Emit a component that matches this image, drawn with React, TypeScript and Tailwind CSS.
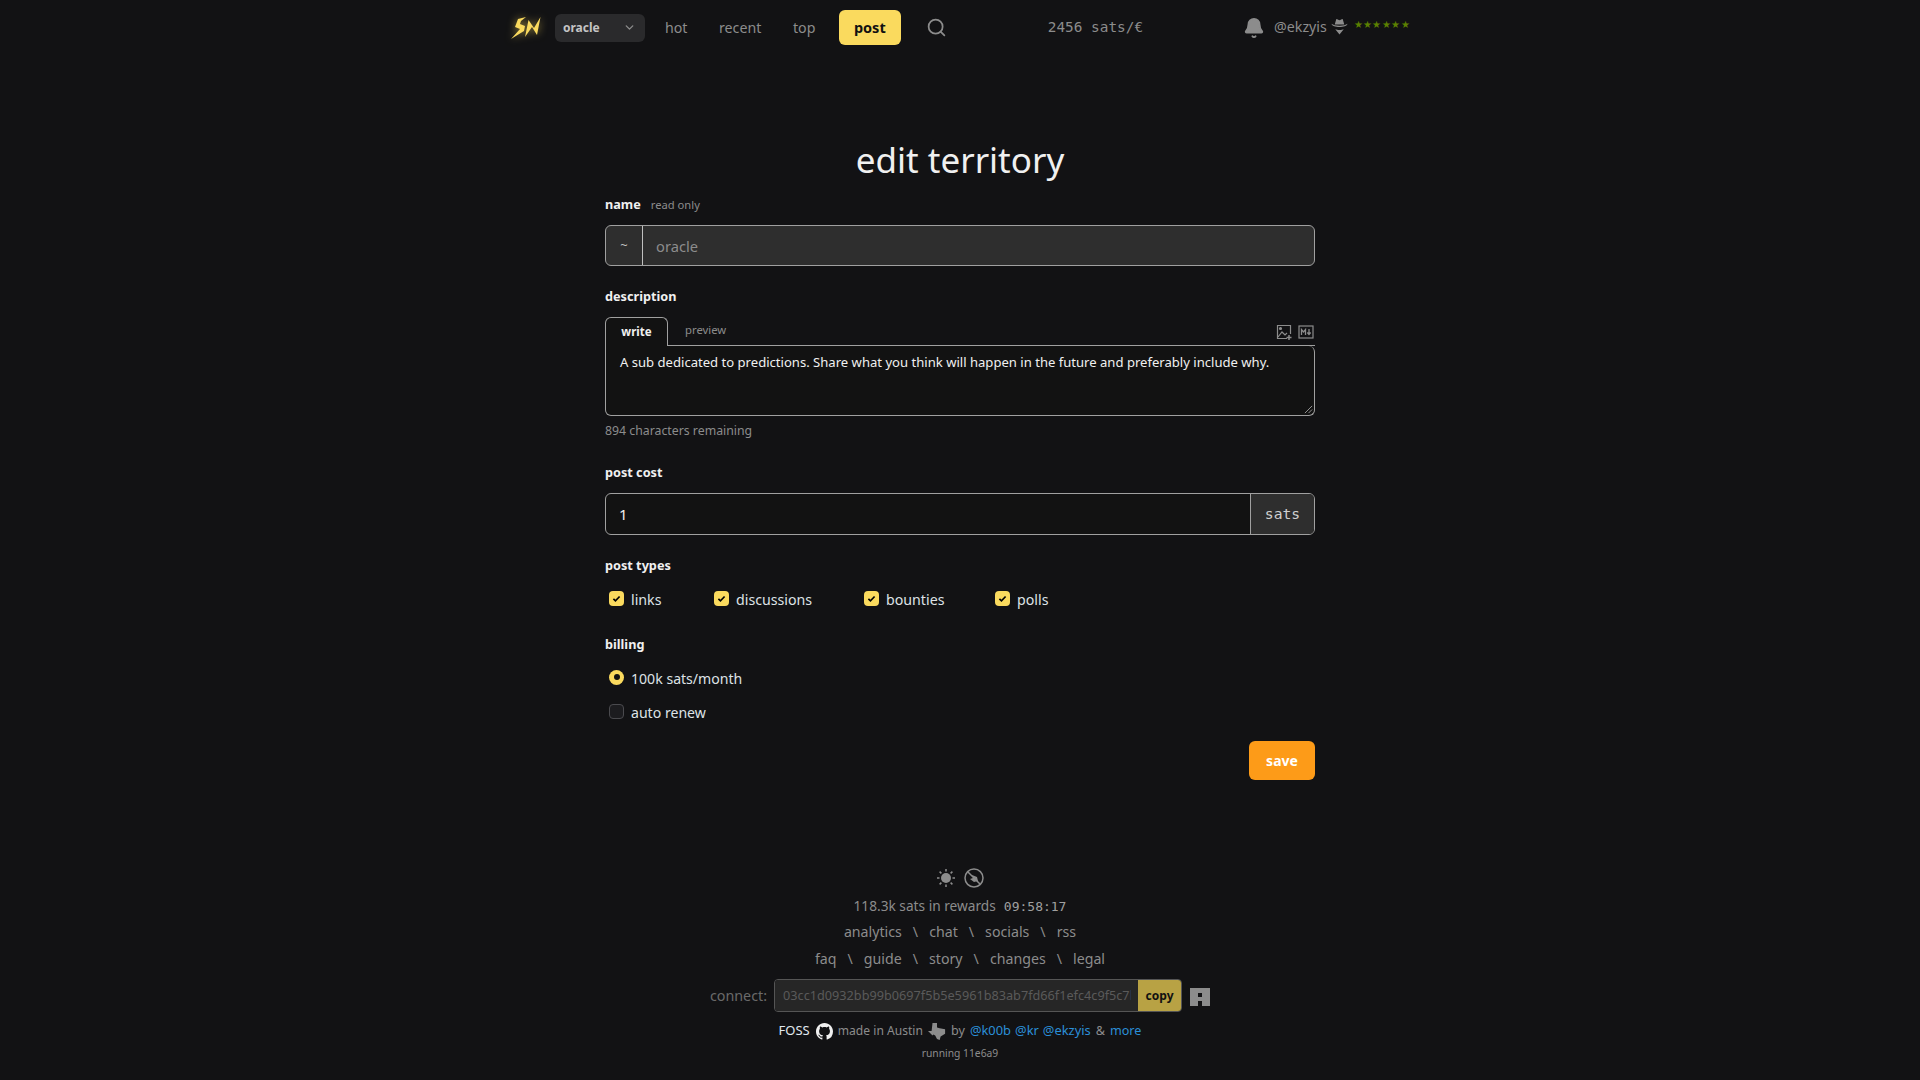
import React from "react";
import { ChevronDown, Search, Bell } from "lucide-react";

const font = "[font-family:'Noto_Sans',sans-serif]";
const mono = "font-['DejaVu_Sans_Mono',monospace]";

function Check({ label, w }: { label: string; w: string }) {
  return (
    <div className={`flex items-center ${w}`}>
      <span className="ml-[4px] mt-[-2px] flex h-[15px] w-[15px] items-center justify-center rounded-[4px] bg-[#fada5e]">
        <svg viewBox="0 0 16 16" className="h-[11px] w-[11px]"><path d="M3.5 8.5l3 3 6-6.500" fill="none" stroke="#000" strokeWidth="2.4" /></svg>
      </span>
      <span className="ml-[7px] mt-[1px] text-[14.2px] text-[#dee2e6]">{label}</span>
    </div>
  );
}

function Sep() {
  return <span className="text-[#8c8c8c]">\</span>;
}

export default function App() {
  return (
    <div className={`${font} flex min-h-[1080px] flex-col items-center bg-[#121214] text-[#f0f0f0]`}>
      <nav className="flex h-[55px] w-[900px] shrink-0 items-center whitespace-nowrap text-[#8c8c8c]">
        <svg viewBox="0 0 32 24" className="mr-[13px] h-[24px] w-[32px] shrink-0 drop-shadow-[0_0_4px_rgba(250,218,94,0.6)]">
          <path d="M16 1 L8 3 L5 11 L10 13 L1 23 L14 15 L15 10 L10 8 L11 5 Z" fill="#fada5e" />
          <path d="M15 21 L18.500 4 L24 12 L30.500 1 L27 19 L22 11 Z" fill="#fada5e" />
        </svg>
        <div className="flex h-[28px] w-[90px] shrink-0 items-center justify-between rounded-[6px] bg-[#2a2a2c] pl-[8px] pr-[9px] text-[12px] font-bold text-[#c4c4c4]">
          <span className="mt-[1px]">oracle</span> <ChevronDown size={13} strokeWidth={2.5} className="text-[#8c8c8c]" />
        </div>
        <span className="ml-[20px] w-[22px] text-[14.2px]">hot</span>
        <span className="ml-[32px] w-[41px] text-[14.2px]">recent</span>
        <span className="ml-[33px] w-[23px] text-[14.2px]">top</span>
        <span className="ml-[23px] flex h-[35px] w-[62px] shrink-0 items-center justify-center rounded-[6px] bg-[#fada5e] text-[14.5px] font-bold text-[#111]">post</span>
        <Search size={21} className="ml-[25px] shrink-0 text-[#8c8c8c]" />
        <span className={`ml-[101px] mt-[1px] w-[96px] ${mono} text-[14.4px]`}>2456 sats/€</span>
        <Bell size={22} fill="#8c8c8c" className="ml-[100px] shrink-0 text-[#8c8c8c]" />
        <span className="ml-[9px] mt-[-1px] w-[54px] text-[14.2px]">@ekzyis</span>
        <svg viewBox="0 0 16 16" className="ml-[3px] mt-[-3px] h-[17px] w-[17px] shrink-0" fill="#8c8c8c">
          <path d="M5 1C6 1 7 2 8 2C9 2 10 1 11 1L12.500 6H3.500Z" />
          <path d="M.5 5.500C3 8 13 8 15.500 5.500C15 9.500 1 9.500 .5 5.500Z" />
          <path d="M4 10.500C6 11.500 10 11.500 12 10.500L8 15.500Z" />
        </svg>
        <span className="ml-[6px] mt-[-4px] text-[9.5px] tracking-[0.4px] text-[#5c8001]">★★★★★★</span>
      </nav>

      <main className="flex w-[710px] flex-col">
        <h1 className="mb-[9px] mt-[78px] text-center text-[35px] font-normal leading-[53px] text-[#f0f0f0]">edit territory</h1>

        <div className="flex h-[20px] items-center gap-[10px] text-[12.7px] font-bold text-[#f0f0f0]">
          name <span className="text-[11.2px] font-normal text-[#8c8c8c]">read only</span>
        </div>
        <div className="mt-[10px] flex h-[41px] overflow-hidden rounded-[6px] border border-[#a0a0a0] bg-[#2e2e2e] text-[#8c8c8c]">
          <span className="flex w-[37px] items-center justify-center border-r border-[#c0c0c0] text-[13px] text-[#c4c4c4]">~</span>
          <span className="flex items-center pl-[13px] pt-[1px] text-[14.7px]">oracle</span>
        </div>

        <div className="mt-[20px] h-[20px] text-[12.7px] font-bold leading-[20px]">description</div>
        <div className="relative mt-[11px] flex h-[29px]">
          <span className="z-10 flex h-[29px] w-[63px] items-center justify-center rounded-t-[6px] border border-b-0 border-[#a0a0a0] bg-[#121212] text-[11.5px] font-bold">write</span>
          <span className="ml-[17px] mt-[5px] text-[11.3px] text-[#8c8c8c]">preview</span>
          <div className="ml-auto mt-[7px] flex gap-[6px] pr-[1px]">
            <svg viewBox="0 0 16 16" className="h-[16px] w-[16px]" fill="none" stroke="#8c8c8c" strokeWidth="1.2">
              <path d="M11 14.500H1.500v-13h13V10" />
              <path d="M2 13l4-5 3 3 2-2" />
              <circle cx="4.5" cy="4.5" r="1" fill="#8c8c8c" />
              <path d="M13 11v5M10.500 13.500h5" strokeWidth="1.5" />
            </svg>
            <svg viewBox="0 0 16 16" className="h-[16px] w-[16px]" fill="none" stroke="#8c8c8c" strokeWidth="1.2">
              <rect x="1" y="2" width="14" height="12" />
              <path d="M3.500 11V5.500l2 2.500 2-2.500V11M11 5v5M9.300 8.500l1.700 2 1.700-2" strokeWidth="1.3" />
            </svg>
          </div>
          <span className="absolute bottom-0 left-[63px] right-0 h-px bg-[#a0a0a0]" />
        </div>
        <div className="relative h-[70px] rounded-b-[6px] rounded-tr-[6px] border border-t-0 border-[#a0a0a0] bg-[#121212] px-[14px] pt-[6px] text-[13.08px] leading-[20px] text-[#f0f0f0]">
          A sub dedicated to predictions. Share what you think will happen in the future and preferably include why.
          <svg viewBox="0 0 10 10" className="absolute bottom-[1px] right-[1px] h-[9px] w-[9px]" stroke="#a0a0a0" strokeWidth="1"><path d="M1 9l8-8M5 9l4-4" /></svg>
        </div>
        <div className="mt-[5px] h-[20px] text-[12.3px] leading-[20px] text-[#8c8c8c]">894 characters remaining</div>

        <div className="mt-[21px] h-[20px] text-[12.7px] font-bold leading-[20px]">post cost</div>
        <div className="mt-[11px] flex h-[42px] overflow-hidden rounded-[6px] border border-[#a0a0a0] bg-[#121212]">
          <span className="flex flex-1 items-center pl-[13px] text-[15px] text-[#f0f0f0]">1</span>
          <span className={`flex w-[64px] items-center justify-center border-l border-[#a0a0a0] bg-[#2e2e2e] pt-[1px] ${mono} text-[14.7px] text-[#d0d0d0]`}>sats</span>
        </div>

        <div className="mt-[20px] h-[20px] text-[12.7px] font-bold leading-[20px]">post types</div>
        <div className="mt-[14px] flex h-[20px]">
          <Check label="links" w="w-[105px]" />
          <Check label="discussions" w="w-[150px]" />
          <Check label="bounties" w="w-[131px]" />
          <Check label="polls" w="w-[100px]" />
        </div>

        <div className="mt-[25px] h-[20px] text-[12.7px] font-bold leading-[20px]">billing</div>
        <div className="mt-[14px] flex h-[20px] items-center">
          <span className="ml-[4px] mt-[-2px] flex h-[15px] w-[15px] items-center justify-center rounded-full bg-[#fada5e]"><span className="h-[6px] w-[6px] rounded-full bg-[#111]" /></span>
          <span className="ml-[7px] mt-[1px] text-[14.1px] text-[#dee2e6]">100k sats/month</span>
        </div>
        <div className="mt-[14px] flex h-[20px] items-center">
          <span className="ml-[4px] mt-[-2px] h-[15px] w-[15px] rounded-[4px] border border-[#4a4a4e] bg-[#1c1c1f]" />
          <span className="ml-[7px] mt-[1px] text-[14.1px] text-[#dee2e6]">auto renew</span>
        </div>
        <div className="mt-[19px] flex justify-end">
          <span className="flex h-[39px] w-[66px] items-center justify-center rounded-[6px] bg-[#fd9b18] text-[14px] font-bold text-white">save</span>
        </div>
      </main>

      <footer className="mt-[86px] flex flex-col items-center text-[14px] text-[#8c8c8c]">
        <div className="flex h-[24px] items-center gap-[8px]">
          <svg viewBox="0 0 20 20" className="h-[20px] w-[20px]" fill="#8c8c8c">
            <circle cx="10" cy="10" r="5" />
            <path d="M10 1v2.500M10 16.500V19M1 10h2.500M16.500 10H19M3.600 3.600l1.800 1.800M14.600 14.600l1.800 1.800M3.600 16.400l1.800-1.800M14.600 5.400l1.800-1.800" stroke="#8c8c8c" strokeWidth="1.500" />
          </svg>
          <svg viewBox="0 0 20 20" className="h-[20px] w-[20px]" fill="none" stroke="#8c8c8c" strokeWidth="1.500">
            <circle cx="10" cy="10" r="9" />
            <path d="M4 4l12 12" />
            <path d="M6 11l3-1-1-3 5 2 1 4-4 1z" fill="#8c8c8c" stroke="none" />
          </svg>
        </div>
        <div className="mt-[6px] flex h-[21px] items-center gap-[8px] text-[13.7px]">
          118.3k sats in rewards <span className={`${mono} text-[13px] text-[#a0a0a0]`}>09:58:17</span>
        </div>
        <div className="mt-[4px] flex h-[21px] items-center gap-[11px] text-[14.200px]">
          <span>analytics</span><Sep /><span>chat</span><Sep /><span>socials</span><Sep /><span>rss</span>
        </div>
        <div className="mt-[6px] flex h-[21px] items-center gap-[11px] text-[14.200px]">
          <span>faq</span><Sep /><span>guide</span><Sep /><span>story</span><Sep /><span>changes</span><Sep /><span>legal</span>
        </div>
        <div className="mt-[10px] flex h-[33px] items-center">
          <span className="mr-[7px] text-[14.300px] text-[#6a6a6a]">connect:</span>
          <div className="flex h-[33px] w-[408px] overflow-hidden rounded-[4px] border border-[#555]">
            <div className="flex w-[363px] items-center bg-[#262626] pl-[8px] pr-[7px]">
              <span className="overflow-hidden whitespace-nowrap text-[12.700px] text-[#5a5a5a]">03cc1d0932bb99b0697f5b5e5961b83ab7fd66f1efc4c9f5c7b</span>
            </div>
            <span className="flex flex-1 items-center justify-center bg-[#b8a244] text-[12px] font-bold text-[#111]">copy</span>
          </div>
          <svg viewBox="0 0 20 18" className="ml-[8px] mt-[2px] h-[18px] w-[20px]" fill="#8c8c8c">
            <path d="M0 0h20v18H12v-5H8v5H0zM8 5v4h4V5z" fillRule="evenodd" />
          </svg>
        </div>
        <div className="mt-[9px] flex h-[20px] items-center">
          <span className="text-[13px] text-[#e0e8f0]">FOSS</span>
          <svg viewBox="0 0 16 16" className="ml-[6px] mr-[5px] h-[17px] w-[17px]" fill="#f0f0f0">
            <path d="M8 0C3.580 0 0 3.580 0 8c0 3.540 2.290 6.530 5.470 7.590.4.070.55-.17.55-.38 0-.19-.01-.82-.01-1.490-2.010.37-2.530-.49-2.690-.94-.09-.23-.48-.94-.82-1.130-.28-.15-.68-.52-.01-.53.630-.01 1.080.58 1.230.82.720 1.210 1.870.87 2.330.66.070-.52.280-.87.510-1.070-1.780-.2-3.640-.89-3.640-3.950 0-.87.310-1.590.820-2.150-.08-.2-.36-1.020.08-2.120 0 0 .67-.21 2.200.82.64-.18 1.320-.27 2-.27s1.360.09 2 .27c1.530-1.040 2.200-.82 2.200-.82.44 1.100.16 1.920.08 2.120.51.56.82 1.270.82 2.150 0 3.070-1.870 3.750-3.650 3.950.29.250.54.730.54 1.480 0 1.070-.01 1.930-.01 2.200 0 .21.15.46.55.38A8.010 8.010 0 0016 8c0-4.420-3.580-8-8-8z" />
          </svg>
          <span className="text-[12.100px]">made in Austin</span>
          <svg viewBox="0 0 20 20" className="ml-[5px] mr-[5px] h-[18px] w-[18px]" fill="#8c8c8c">
            <path d="M5 1h5v5l3 1 6 1v5l-5 3-1 4-3-1-2-4-2-1-1 1-3-3-2-2h4z" />
          </svg>
          <span className="text-[12.600px]">by</span>
          <span className="ml-[5px] text-[12.900px] text-[#2b8fd8]">@k00b</span>
          <span className="ml-[4px] text-[12.900px] text-[#2b8fd8]">@kr</span>
          <span className="ml-[4px] text-[12.900px] text-[#2b8fd8]">@ekzyis</span>
          <span className="ml-[5px] text-[12.600px]">&amp;</span>
          <span className="ml-[5px] text-[12.600px] text-[#2b8fd8]">more</span>
        </div>
        <div className="mt-[3px] h-[18px] text-[10.300px] leading-[18px]">running 11e6a9</div>
      </footer>
    </div>
  );
}
